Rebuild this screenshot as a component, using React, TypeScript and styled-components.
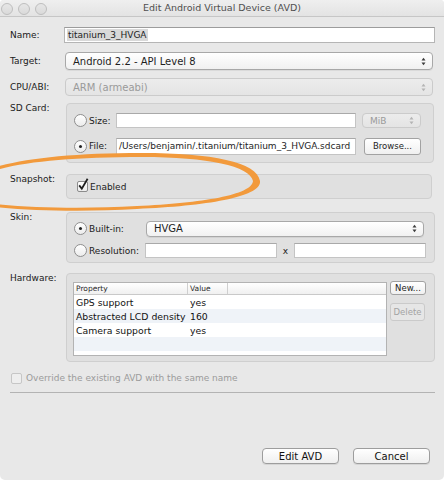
import React from 'react';
import styled, { createGlobalStyle } from 'styled-components';

const GlobalStyle = createGlobalStyle`
  html, body {
    margin: 0;
    padding: 0;
    background: #ffffff;
  }
  body {
    font-family: 'DejaVu Sans', 'Liberation Sans', sans-serif;
    font-size: 9px;
    color: #1e1e1e;
  }
`;

const hardware = [
  { name: 'GPS support', value: 'yes' },
  { name: 'Abstracted LCD density', value: '160' },
  { name: 'Camera support', value: 'yes' },
  { name: '', value: '' },
  { name: '', value: '' },
];

function Arrows({ faded }: { faded?: boolean }) {
  const c = faded ? '#b4b4b4' : '#3c3c3c';
  return (
    <svg width="5" height="9" viewBox="0 0 5 9">
      <path d="M0.5 3.5 L2.5 0.8 L4.5 3.5 Z" fill={c} />
      <path d="M0.5 5.5 L2.5 8.2 L4.5 5.5 Z" fill={c} />
    </svg>
  );
}

function Check() {
  return (
    <svg width="12" height="13" viewBox="0 0 12 13">
      <path d="M2.2 7.4 L4.8 10.6 L10.6 0.8" fill="none" stroke="#1f1f1f" strokeWidth="1.8" />
    </svg>
  );
}

export default function App() {
  return (
    <>
      <GlobalStyle />
      <Window>
        <TitleBar>
          <Lights>
            <Light />
            <Light />
            <Light />
          </Lights>
          <Title>Edit Android Virtual Device (AVD)</Title>
        </TitleBar>

        <Body>
          <Row $top={10} $h={16}>
            <Label>Name:</Label>
            <TextField $ml={-2} $mr={-3}>
              <Selected>titanium_3_HVGA</Selected>
            </TextField>
          </Row>

          <Row $top={9} $h={18}>
            <Label>Target:</Label>
            <Select $ml={-1} $mr={-1}>
              <span>Android 2.2 - API Level 8</span>
              <Arrows />
            </Select>
          </Row>

          <Row $top={8} $h={18}>
            <Label>CPU/ABI:</Label>
            <Select $ml={-1} $mr={-1} $disabled>
              <span>ARM (armeabi)</span>
              <Arrows faded />
            </Select>
          </Row>

          <GroupRow $top={7}>
            <Label>SD Card:</Label>
            <Group $h={60} $pt={9} $gap={9} $pr={12}>
              <InnerRow $h={15}>
                <Choice $w={42}>
                  <Radio />
                  Size:
                </Choice>
                <Field $w={240} />
                <Select $w={59} $ml={6} $disabled $h={15} $small>
                  <span>MiB</span>
                  <Arrows faded />
                </Select>
              </InnerRow>
              <InnerRow $h={18}>
                <Choice $w={42}>
                  <Radio $on />
                  File:
                </Choice>
                <Field $w={240} $h={17}>/Users/benjamin/.titanium/titanium_3_HVGA.sdcard</Field>
                <PushButton $w={57} $ml={8}>Browse...</PushButton>
              </InnerRow>
            </Group>
          </GroupRow>

          <GroupRow $top={11}>
            <Label>Snapshot:</Label>
            <Group $h={25} $pt={0} $pl={10} $center>
              <Choice>
                <CheckBox>
                  <Check />
                </CheckBox>
                Enabled
              </Choice>
            </Group>
          </GroupRow>

          <GroupRow $top={13}>
            <Label>Skin:</Label>
            <Group $h={51} $pt={8} $gap={7}>
              <InnerRow $h={15}>
                <Choice $w={72}>
                  <Radio $on />
                  Built-in:
                </Choice>
                <Select $w={278} $h={16}>
                  <span>HVGA</span>
                  <Arrows />
                </Select>
              </InnerRow>
              <InnerRow $h={15}>
                <Choice $w={71}>
                  <Radio />
                  Resolution:
                </Choice>
                <Field $w={132} />
                <Times>x</Times>
                <Field $w={132} />
              </InnerRow>
            </Group>
          </GroupRow>

          <GroupRow $top={10}>
            <Label>Hardware:</Label>
            <Group $h={89} $pt={8} $pl={6}>
              <InnerRow $h={74} $start>
                <Table>
                  <HeadRow>
                    <HeadCell $w={114}>Property</HeadCell>
                    <HeadCell $w={40}>Value</HeadCell>
                    <HeadCell $w={0} $last />
                  </HeadRow>
                  {hardware.map((item, i) => (
                    <TableRow key={i} $alt={i % 2 === 1}>
                      <Cell $w={114}>{item.name}</Cell>
                      <Cell $w={40}>{item.value}</Cell>
                    </TableRow>
                  ))}
                </Table>
                <SideButtons>
                  <PushButton $w={36} $h={14}>New...</PushButton>
                  <PushButton $w={35} $h={18} $disabled>
                    Delete
                  </PushButton>
                </SideButtons>
              </InnerRow>
            </Group>
          </GroupRow>

          <OverrideRow>
            <SmallBox />
            Override the existing AVD with the same name
          </OverrideRow>

          <Separator />

          <Footer>
            <DialogButton>Edit AVD</DialogButton>
            <DialogButton>Cancel</DialogButton>
          </Footer>
        </Body>

        <Marker viewBox="0 0 444 480" width="444" height="480">
          <path
            fillRule="evenodd"
            fill="#f29a3c"
            d="M260 181 C257 162 212 153 142 153 C62 153 12 160 -20 172 L-20 205 C20 211 82 212 137 209 C207 206 262 197 260 181 Z
               M253 181 C250 166 208 157 142 157 C62 157 12 163 -20 175 L-20 202 C20 208 82 209 137 206 C202 203 252 195 253 181 Z"
          />
        </Marker>
      </Window>
    </>
  );
}

const Window = styled.div`
  position: relative;
  width: 444px;
  height: 480px;
  background: #e8e8e8;
  overflow: hidden;
  border-radius: 4px 4px 5px 5px;
`;

const TitleBar = styled.div`
  position: relative;
  height: 16px;
  display: flex;
  align-items: center;
  justify-content: center;
  background: linear-gradient(#efefef, #e3e3e3);
  border-bottom: 1px solid #c6c6c6;
`;

const Lights = styled.div`
  position: absolute;
  left: 1px;
  top: 3px;
  display: flex;
  gap: 5px;
`;

const Light = styled.span`
  width: 10px;
  height: 10px;
  border-radius: 50%;
  border: 1px solid #bdbdbd;
  background: linear-gradient(#e6e6e6, #dadada);
`;

const Title = styled.div`
  color: #4f4f4f;
  font-size: 9.5px;
  line-height: 16px;
`;

const Body = styled.div`
  padding: 0 12px 0 10px;
`;

const Row = styled.div<{ $top: number; $h: number }>`
  display: flex;
  align-items: center;
  margin-top: ${(p) => p.$top}px;
  height: ${(p) => p.$h}px;
`;

const GroupRow = styled.div<{ $top: number }>`
  display: flex;
  align-items: flex-start;
  margin-top: ${(p) => p.$top}px;
`;

const Label = styled.div`
  width: 56px;
  flex: none;
  color: #202020;
  line-height: 11px;
`;

const TextField = styled.div<{ $ml?: number; $mr?: number }>`
  flex: 1;
  align-self: stretch;
  margin: 0 ${(p) => p.$mr ?? 0}px 0 ${(p) => p.$ml ?? 0}px;
  background: #ffffff;
  border: 1px solid #b5b5b5;
  border-top-color: #9c9c9c;
  display: flex;
  align-items: center;
  padding-left: 2px;
  box-sizing: border-box;
`;

const Selected = styled.span`
  background: #d9d9d9;
  padding: 0 1px;
  line-height: 12px;
`;

const Select = styled.div<{
  $ml?: number;
  $mr?: number;
  $w?: number;
  $h?: number;
  $disabled?: boolean;
  $small?: boolean;
}>`
  ${(p) => (p.$w ? `width: ${p.$w}px; flex: none;` : 'flex: 1;')}
  height: ${(p) => p.$h ?? 18}px;
  margin: 0 ${(p) => p.$mr ?? 0}px 0 ${(p) => p.$ml ?? 0}px;
  box-sizing: border-box;
  display: flex;
  align-items: center;
  justify-content: space-between;
  padding: 0 6px 0 7px;
  border-radius: 4px;
  border: 1px solid ${(p) => (p.$disabled ? '#cbcbcb' : '#a8a8a8')};
  background: ${(p) => (p.$disabled ? 'linear-gradient(#ececec, #e4e4e4)' : 'linear-gradient(#ffffff, #f1f1f1)')};
  color: ${(p) => (p.$disabled ? '#9a9a9a' : '#1e1e1e')};
  box-shadow: ${(p) => (p.$disabled ? 'none' : '0 1px 0 rgba(0,0,0,0.06)')};
  font-size: ${(p) => (p.$small ? 9 : 10)}px;
  svg {
    flex: none;
  }
`;

const Group = styled.div<{ $h: number; $pt: number; $pl?: number; $pr?: number; $gap?: number; $center?: boolean }>`
  flex: 1;
  height: ${(p) => p.$h}px;
  box-sizing: border-box;
  border: 1px solid #cfcfcf;
  border-radius: 4px;
  background: #e0e0e0;
  padding: ${(p) => p.$pt}px ${(p) => p.$pr ?? 8}px 0 ${(p) => p.$pl ?? 7}px;
  display: flex;
  flex-direction: column;
  justify-content: ${(p) => (p.$center ? 'center' : 'flex-start')};
  gap: ${(p) => p.$gap ?? 0}px;
`;

const InnerRow = styled.div<{ $h: number; $start?: boolean }>`
  display: flex;
  align-items: ${(p) => (p.$start ? 'flex-start' : 'center')};
  height: ${(p) => p.$h}px;
`;

const Choice = styled.div<{ $w?: number }>`
  display: flex;
  align-items: center;
  gap: 2px;
  ${(p) => (p.$w ? `width: ${p.$w}px;` : '')}
  flex: none;
  color: #202020;
`;

const Radio = styled.span<{ $on?: boolean }>`
  position: relative;
  width: 13px;
  height: 13px;
  box-sizing: border-box;
  border-radius: 50%;
  border: 1px solid #8f8f8f;
  background: linear-gradient(#ffffff, #ececec);
  flex: none;
  &::after {
    content: '';
    display: ${(p) => (p.$on ? 'block' : 'none')};
    position: absolute;
    left: 4px;
    top: 4px;
    width: 3px;
    height: 3px;
    border-radius: 50%;
    background: #222222;
  }
`;

const Field = styled.div<{ $w: number; $h?: number }>`
  width: ${(p) => p.$w}px;
  height: ${(p) => p.$h ?? 15}px;
  flex: none;
  box-sizing: border-box;
  background: #ffffff;
  border: 1px solid #c4c4c4;
  border-top-color: #a9a9a9;
  padding-left: 2px;
  display: flex;
  align-items: center;
  white-space: nowrap;
  overflow: hidden;
  color: #1e1e1e;
`;

const Times = styled.div`
  width: 17px;
  text-align: center;
  flex: none;
  color: #222222;
`;

const PushButton = styled.div<{ $w: number; $h?: number; $ml?: number; $disabled?: boolean }>`
  width: ${(p) => p.$w}px;
  height: ${(p) => p.$h ?? 17}px;
  margin-left: ${(p) => p.$ml ?? 0}px;
  flex: none;
  box-sizing: border-box;
  border-radius: 3px;
  border: 1px solid ${(p) => (p.$disabled ? '#cacaca' : '#a2a2a2')};
  background: ${(p) => (p.$disabled ? '#e6e6e6' : 'linear-gradient(#ffffff, #f0f0f0)')};
  color: ${(p) => (p.$disabled ? '#a3a3a3' : '#1e1e1e')};
  display: flex;
  align-items: center;
  justify-content: center;
  font-size: 8.5px;
`;

const CheckBox = styled.span`
  position: relative;
  width: 11px;
  height: 11px;
  box-sizing: border-box;
  border: 1px solid #8c8c8c;
  border-radius: 2px;
  background: linear-gradient(#ffffff, #ededed);
  svg {
    position: absolute;
    left: -1px;
    top: -4px;
  }
`;

const Table = styled.div`
  width: 314px;
  height: 74px;
  flex: none;
  box-sizing: border-box;
  border: 1px solid #b3b3b3;
  background: #ffffff;
  overflow: hidden;
`;

const HeadRow = styled.div`
  display: flex;
  height: 11px;
  border-bottom: 1px solid #c9c9c9;
  background: linear-gradient(#ffffff, #f0f0f0);
`;

const HeadCell = styled.div<{ $w: number; $last?: boolean }>`
  ${(p) => (p.$last ? 'flex: 1;' : `width: ${p.$w}px; flex: none; border-right: 1px solid #cfcfcf;`)}
  box-sizing: border-box;
  padding-left: 2px;
  font-size: 7.5px;
  line-height: 11px;
  color: #2a2a2a;
`;

const TableRow = styled.div<{ $alt: boolean }>`
  display: flex;
  height: 14px;
  align-items: center;
  background: ${(p) => (p.$alt ? '#eff3f8' : '#ffffff')};
`;

const Cell = styled.div<{ $w: number }>`
  width: ${(p) => p.$w}px;
  flex: none;
  box-sizing: border-box;
  padding-left: 2px;
  white-space: nowrap;
  font-size: 9.3px;
  color: #111111;
`;

const SideButtons = styled.div`
  display: flex;
  flex-direction: column;
  gap: 8px;
  margin-left: 3px;
  margin-top: -1px;
`;

const OverrideRow = styled.div`
  display: flex;
  align-items: center;
  gap: 4px;
  margin-top: 10px;
  height: 12px;
  padding-left: 1px;
  color: #9b9b9b;
`;

const SmallBox = styled.span`
  width: 11px;
  height: 11px;
  box-sizing: border-box;
  border: 1px solid #c6c6c6;
  border-radius: 2px;
  background: #eeeeee;
`;

const Separator = styled.div`
  margin: 8px -3px 0 0;
  height: 1px;
  background: #b3b3b3;
`;

const Footer = styled.div`
  display: flex;
  justify-content: flex-end;
  gap: 14px;
  margin-top: 55px;
  margin-right: 2px;
`;

const DialogButton = styled.div`
  width: 77px;
  height: 16px;
  box-sizing: border-box;
  border-radius: 4px;
  border: 1px solid #9d9d9d;
  background: linear-gradient(#ffffff, #efefef);
  box-shadow: 0 1px 0 rgba(0, 0, 0, 0.08);
  display: flex;
  align-items: center;
  justify-content: center;
  color: #111111;
  font-size: 10px;
`;

const Marker = styled.svg`
  position: absolute;
  left: 0;
  top: 0;
  pointer-events: none;
`;
